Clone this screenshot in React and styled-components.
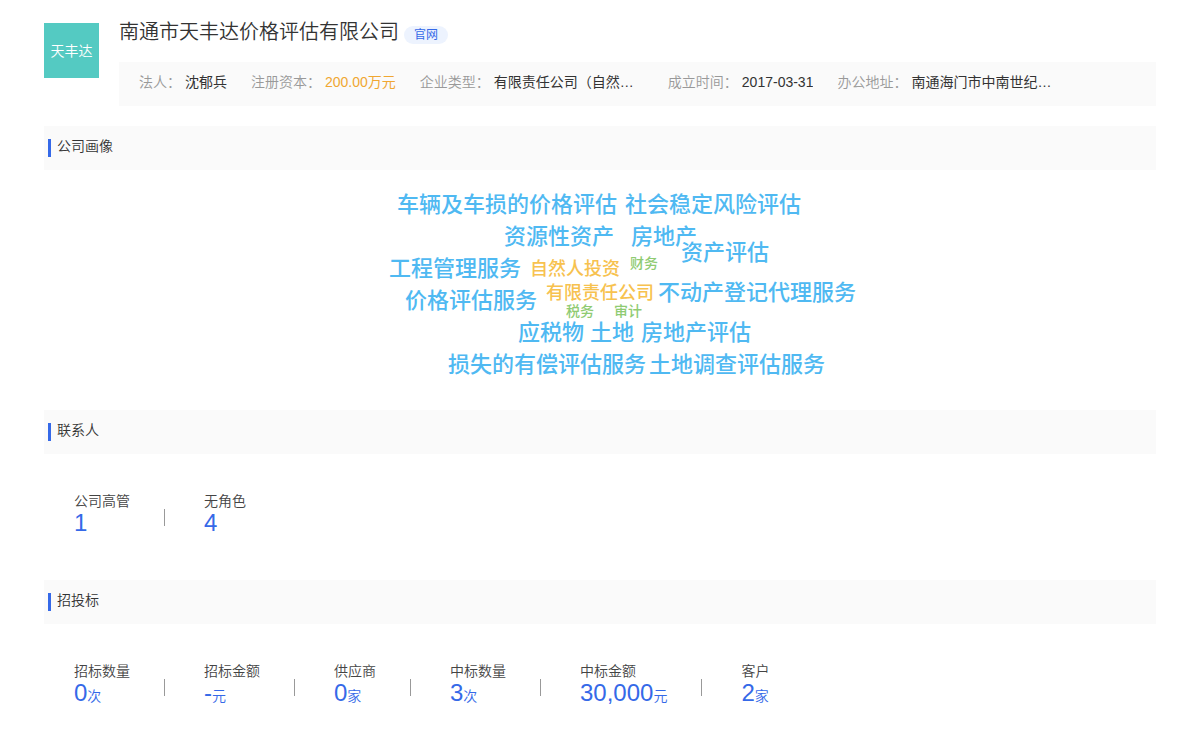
import React from 'react'
import styled, { createGlobalStyle } from 'styled-components'

const facts = [
  { label: '法人', value: '沈郁兵' },
  { label: '注册资本', value: '200.00万元', highlight: true },
  { label: '企业类型', value: '有限责任公司（自然…', clipped: true },
  { label: '成立时间', value: '2017-03-31' },
  { label: '办公地址', value: '南通海门市中南世纪…', clipped: true },
]

// x and y are measured from the top left corner of the cloud canvas
const words = [
  { text: '车辆及车损的价格评估', x: 97, y: 19, level: 'large' },
  { text: '社会稳定风险评估', x: 325, y: 19, level: 'large' },
  { text: '资源性资产', x: 204, y: 51, level: 'large' },
  { text: '房地产', x: 331, y: 51, level: 'large' },
  { text: '资产评估', x: 381, y: 67, level: 'large' },
  { text: '工程管理服务', x: 89, y: 83, level: 'large' },
  { text: '价格评估服务', x: 105, y: 115, level: 'large' },
  { text: '不动产登记代理服务', x: 358, y: 107, level: 'large' },
  { text: '应税物', x: 218, y: 147, level: 'large' },
  { text: '土地', x: 290, y: 147, level: 'large' },
  { text: '房地产评估', x: 341, y: 147, level: 'large' },
  { text: '损失的有偿评估服务', x: 148, y: 179, level: 'large' },
  { text: '土地调查评估服务', x: 349, y: 179, level: 'large' },
  { text: '自然人投资', x: 230, y: 85, level: 'medium' },
  { text: '有限责任公司', x: 246, y: 109, level: 'medium' },
  { text: '财务', x: 330, y: 83, level: 'small' },
  { text: '税务', x: 266, y: 131, level: 'small' },
  { text: '审计', x: 314, y: 131, level: 'small' },
]

const contacts = [
  { label: '公司高管', value: '1' },
  { label: '无角色', value: '4' },
]

const bids = [
  { label: '招标数量', value: '0', unit: '次' },
  { label: '招标金额', value: '-', unit: '元' },
  { label: '供应商', value: '0', unit: '家' },
  { label: '中标数量', value: '3', unit: '次' },
  { label: '中标金额', value: '30,000', unit: '元' },
  { label: '客户', value: '2', unit: '家' },
]

function Stats({ items }) {
  return (
    <StatList>
      {items.map((item) => (
        <Stat key={item.label}>
          <StatLabel>{item.label}</StatLabel>
          <StatValue>
            {item.value}
            {item.unit && <Unit>{item.unit}</Unit>}
          </StatValue>
        </Stat>
      ))}
    </StatList>
  )
}

export default function App() {
  return (
    <Page>
      <GlobalStyle />
      <Header>
        <Logo>天丰达</Logo>
        <Summary>
          <TitleRow>
            <Title>南通市天丰达价格评估有限公司</Title>
            <SiteLink href="#">官网</SiteLink>
          </TitleRow>
          <Facts>
            {facts.map((fact) => (
              <Fact key={fact.label}>
                <FactLabel>{fact.label}：</FactLabel>
                <FactValue $highlight={fact.highlight} $clipped={fact.clipped}>{fact.value}</FactValue>
              </Fact>
            ))}
          </Facts>
        </Summary>
      </Header>

      <section>
        <SectionTitle>公司画像</SectionTitle>
        <Cloud>
          {words.map((word) => (
            <Word key={word.text} $x={word.x} $y={word.y} $level={word.level}>{word.text}</Word>
          ))}
        </Cloud>
      </section>

      <section>
        <SectionTitle>联系人</SectionTitle>
        <Stats items={contacts} />
      </section>

      <section>
        <SectionTitle>招投标</SectionTitle>
        <Stats items={bids} />
      </section>
    </Page>
  )
}

const GlobalStyle = createGlobalStyle`
  * {
    box-sizing: border-box;
  }

  body {
    margin: 0;
    background: #fff;
    color: #444;
    font-family: "Liberation Sans", "Noto Sans CJK SC", sans-serif;
    font-size: 14px;
    font-weight: 350;
    line-height: 20px;
  }
`;

const Page = styled.main`
  padding: 16px 44px 0;
`;

const Header = styled.header`
  display: flex;
  gap: 20px;
  margin-bottom: 20px;
`;

const Logo = styled.div`
  display: flex;
  flex: none;
  align-items: center;
  justify-content: center;
  width: 55px;
  height: 55px;
  margin-top: 7px;
  background: #54cac2;
  color: #fff;
`;

const Summary = styled.div`
  flex: 1;
  min-width: 0;
`;

const TitleRow = styled.div`
  display: flex;
  align-items: flex-start;
  gap: 5px;
  margin-bottom: 14px;
`;

const Title = styled.h1`
  margin: 0;
  font-size: 20px;
  font-weight: 350;
  line-height: 32px;
  color: #333;
`;

const SiteLink = styled.a`
  margin-top: 10px;
  padding: 0 10px;
  border-radius: 9px;
  background: #edf3fe;
  color: #3569e8;
  font-size: 12px;
  font-weight: 400;
  line-height: 18px;
  text-decoration: none;
`;

const Facts = styled.dl`
  display: flex;
  gap: 24px;
  margin: 0;
  padding: 10px 20px 14px;
  background: #fafafa;
`;

const Fact = styled.div`
  display: flex;
  gap: 4px;
  white-space: nowrap;
`;

const FactLabel = styled.dt`
  color: #999;
`;

const FactValue = styled.dd`
  width: ${(props) => (props.$clipped ? '150px' : 'auto')};
  margin: 0;
  overflow: hidden;
  color: ${(props) => (props.$highlight ? '#f0a732' : '#333')};
  font-weight: 400;
`;

const SectionTitle = styled.h2`
  display: flex;
  align-items: flex-start;
  margin: 0;
  padding: 10px 4px 13px;
  background: #fafafa;
  color: #333;
  font-size: 14px;
  font-weight: 350;
  line-height: 20px;

  &::before {
    content: '';
    width: 3px;
    height: 18px;
    margin: 3px 6px 0 0;
    background: #3569e8;
  }
`;

const Cloud = styled.div`
  position: relative;
  width: 600px;
  height: 240px;
  margin: 0 auto;
`;

const levels = {
  large: { size: 22, line: 32, color: '#4fb9f2' },
  medium: { size: 18, line: 28, color: '#f7c24f' },
  small: { size: 14, line: 20, color: '#8fcb72' },
}

const Word = styled.span`
  position: absolute;
  left: ${(props) => props.$x}px;
  top: ${(props) => props.$y}px;
  color: ${(props) => levels[props.$level].color};
  font-size: ${(props) => levels[props.$level].size}px;
  line-height: ${(props) => levels[props.$level].line}px;
  font-weight: 500;
  white-space: nowrap;
`;

const StatList = styled.ul`
  display: flex;
  flex-wrap: wrap;
  margin: 0;
  padding: 37px 30px 45px;
  list-style: none;
`;

const Stat = styled.li`
  display: flex;
  flex-direction: column;
  position: relative;
  margin-right: 74px;

  /* thin rule between two neighbouring figures */
  &:not(:last-child)::after {
    content: '';
    position: absolute;
    top: 18px;
    right: -35px;
    width: 1px;
    height: 17px;
    background: #999;
  }
`;

const StatLabel = styled.span`
  color: #444;
`;

const StatValue = styled.span`
  color: #3569e8;
  font-size: 24px;
  line-height: 24px;
`;

const Unit = styled.small`
  font-size: 14px;
  line-height: 14px;
`;
